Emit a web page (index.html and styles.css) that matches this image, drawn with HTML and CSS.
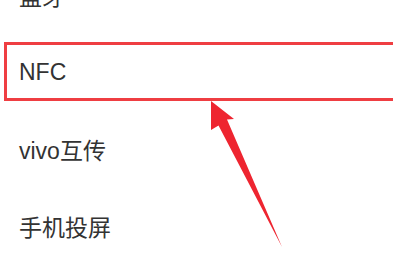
FILE: index.html
```html
<!DOCTYPE html>
<html lang="zh-CN">
<head>
<meta charset="utf-8">
<title>设置</title>
<link rel="stylesheet" href="styles.css">
</head>
<body>
<div class="screen">
  <ul class="list">
    <li class="row">蓝牙</li>
    <li class="row">NFC</li>
    <li class="row">vivo互传</li>
    <li class="row">手机投屏</li>
  </ul>
  <div class="highlight"></div>
  <svg class="arrow" width="393" height="262" viewBox="0 0 393 262">
    <polygon points="211,101 234,119 227,119.5 282,247 218.5,125.5 211,130" fill="#ee2530"/>
  </svg>
</div>
</body>
</html>
```
FILE: styles.css
```css
html, body {
  margin: 0;
  padding: 0;
  background: #ffffff;
}
.screen {
  position: relative;
  width: 393px;
  height: 262px;
  overflow: hidden;
  background: #ffffff;
}
.list {
  list-style: none;
  margin: -43.5px 0 0 0;
  padding: 0;
  display: flex;
  flex-direction: column;
}
.row {
  height: 77px;
  display: flex;
  align-items: center;
  padding-left: 19px;
  font-family: "Liberation Sans", "Noto Sans CJK SC", sans-serif;
  font-size: 23px;
  color: #333333;
}
.highlight {
  position: absolute;
  left: 4px;
  top: 42px;
  width: 400px;
  height: 53px;
  border: 3px solid #ef3e42;
}
.arrow {
  position: absolute;
  left: 0;
  top: 0;
}
```
